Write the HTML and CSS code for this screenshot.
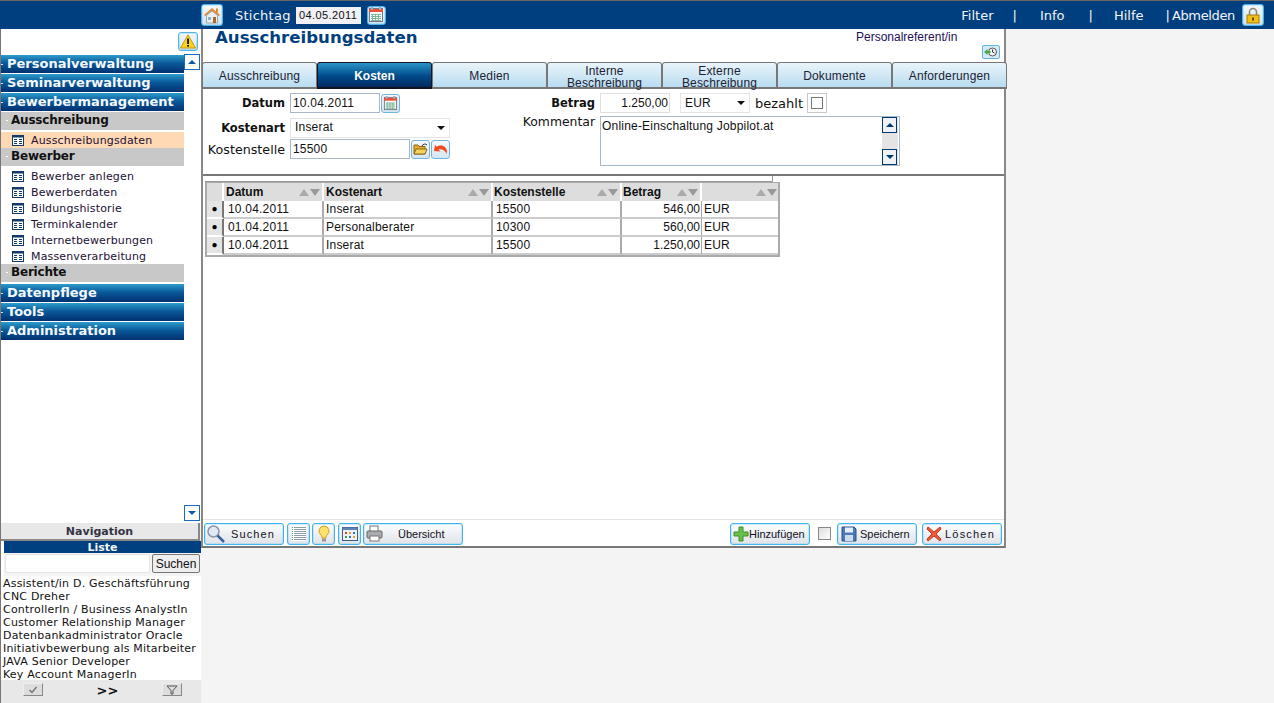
FILE: index.html
```html
<!DOCTYPE html>
<html lang="de">
<head>
<meta charset="utf-8">
<title>Ausschreibungsdaten</title>
<link rel="stylesheet" href="styles.css">
</head>
<body>
<svg class="defs" width="0" height="0">
  <symbol id="cal" viewBox="0 0 16 16">
    <rect x="1.500" y="1.500" width="13" height="13" fill="#fafafa" stroke="#778"/>
    <rect x="1" y="2" width="14" height="3" fill="#e8503a"/>
    <rect x="3" y="0" width="2" height="3" fill="#aab"/><rect x="11" y="0" width="2" height="3" fill="#aab"/>
    <path d="M3 7.500h10M3 9.500h10M3 11.500h10M3 13.500h10M4.500 7v7M7.500 7v7M10.500 7v7" stroke="#7fb59a" stroke-width="1" fill="none"/>
  </symbol>
  <symbol id="doc" viewBox="0 0 12 11">
    <rect x=".5" y=".5" width="11" height="10" fill="#fff" stroke="#123a68"/>
    <rect x=".5" y=".5" width="11" height="2" fill="#123a68"/>
    <path d="M2 4.500h3M7 4.500h3M2 6.500h3M7 6.500h3M2 8.500h3M7 8.500h3" stroke="#123a68"/>
  </symbol>
</svg>
<div class="app">
  <header class="topbar">
    <button class="icon-frame home" type="button" aria-label="Start">
      <svg width="18" height="18" viewBox="0 0 18 18"><path d="M1 9 9 2l8 7-1.500 1L9 4.500 2.500 10z" fill="#e8862a"/><path d="M3.500 9.500 9 5l5.500 4.500V17h-11z" fill="#eef0f4" stroke="#9aa"/><rect x="10" y="11" width="3" height="6" fill="#b0652a"/><rect x="5" y="11" width="3" height="3" fill="#8fb1cf"/><rect x="13" y="2.500" width="2" height="4" fill="#e8862a"/></svg>
    </button>
    <span class="stichtag">Stichtag</span>
    <span class="date-box">04.05.2011</span>
    <button class="icon-frame cal-top" type="button" aria-label="Kalender"><svg width="16" height="16"><use href="#cal"/></svg></button>
    <nav class="topnav">
      <a>Filter</a><span class="sep s1">|</span><a>Info</a><span class="sep s2">|</span><a>Hilfe</a><span class="sep s3">|</span><a class="logout">Abmelden</a>
      <button class="icon-frame lock" type="button" aria-label="Sperren"><svg width="16" height="17" viewBox="0 0 16 17"><path d="M4.500 8V5a3.500 3.500 0 0 1 7 0v3" fill="none" stroke="#8a8a70" stroke-width="1.600"/><rect x="2" y="8" width="12" height="8" fill="#f2c010" stroke="#a87a10"/><rect x="7" y="10.500" width="2" height="3" fill="#6a4a10"/></svg></button>
    </nav>
  </header>

  <div class="main">
    <aside class="sidebar">
      <div class="nav-area">
        <div class="warn-row">
          <button class="icon-frame warn" type="button" aria-label="Warnung"><svg width="16" height="15" viewBox="0 0 16 15"><path d="M8 .8 15.500 14H.5z" fill="#fbd21e" stroke="#c79a10"/><rect x="7.200" y="4.500" width="1.700" height="5.500"/><rect x="7.200" y="11" width="1.700" height="1.700"/></svg></button>
        </div>
        <div class="nav-body">
          <ul class="menu">
            <li class="lvl1">Personalverwaltung</li>
            <li class="lvl1">Seminarverwaltung</li>
            <li class="lvl1">Bewerbermanagement</li>
            <li class="lvl2">Ausschreibung</li>
            <li class="item current"><svg width="12" height="11"><use href="#doc"/></svg>Ausschreibungsdaten</li>
            <li class="lvl2 tight">Bewerber</li>
            <li class="item first"><svg width="12" height="11"><use href="#doc"/></svg>Bewerber anlegen</li>
            <li class="item"><svg width="12" height="11"><use href="#doc"/></svg>Bewerberdaten</li>
            <li class="item"><svg width="12" height="11"><use href="#doc"/></svg>Bildungshistorie</li>
            <li class="item"><svg width="12" height="11"><use href="#doc"/></svg>Terminkalender</li>
            <li class="item"><svg width="12" height="11"><use href="#doc"/></svg>Internetbewerbungen</li>
            <li class="item"><svg width="12" height="11"><use href="#doc"/></svg>Massenverarbeitung</li>
            <li class="lvl2 tight">Berichte</li>
            <li class="lvl1 after">Datenpflege</li>
            <li class="lvl1">Tools</li>
            <li class="lvl1">Administration</li>
          </ul>
          <div class="scroller">
            <button class="scroll-btn" type="button" aria-label="Hoch"><span class="arrow up"></span></button>
            <button class="scroll-btn" type="button" aria-label="Runter"><span class="arrow down"></span></button>
          </div>
        </div>
      </div>
      <div class="nav-label">Navigation</div>
      <div class="list-panel">
        <div class="list-title">Liste</div>
        <div class="list-search"><input class="list-input" type="text" aria-label="Suche"><button class="list-btn" type="button">Suchen</button></div>
        <ul class="list-items">
          <li>Assistent/in D. Geschäftsführung</li>
          <li>CNC Dreher</li>
          <li>ControllerIn / Business AnalystIn</li>
          <li>Customer Relationship Manager</li>
          <li>Datenbankadministrator Oracle</li>
          <li>Initiativbewerbung als Mitarbeiter</li>
          <li>JAVA Senior Developer</li>
          <li>Key Account ManagerIn</li>
        </ul>
      </div>
      <div class="list-foot">
        <button class="mini" type="button" aria-label="Auswahl"><svg width="10" height="8" viewBox="0 0 10 8"><path d="M1.500 4 4 6.500 8.500 1" fill="none" stroke="#777" stroke-width="1.500"/></svg></button>
        <span class="more">&gt;&gt;</span>
        <button class="mini" type="button" aria-label="Filter"><svg width="12" height="10" viewBox="0 0 12 10"><path d="M1 1h10L7 5.500V9H5V5.500z" fill="#ddd" stroke="#555"/></svg></button>
      </div>
    </aside>

    <main class="content">
      <div class="title-row">
        <h1>Ausschreibungsdaten</h1>
        <div class="role">
          <span>Personalreferent/in</span>
          <span class="hist"><svg width="14" height="10" viewBox="0 0 14 10"><circle cx="8.500" cy="5" r="4" fill="#f4f4f4" stroke="#555"/><path d="M8.500 2.500V5l2 1" fill="none" stroke="#333"/><path d="M0 5l3.500-3v2h3v2h-3v2z" fill="#48a848"/></svg></span>
        </div>
      </div>
      <div class="tabs">
        <div class="tab">Ausschreibung</div>
        <div class="tab active">Kosten</div>
        <div class="tab">Medien</div>
        <div class="tab two">Interne<br>Beschreibung</div>
        <div class="tab two">Externe<br>Beschreibung</div>
        <div class="tab">Dokumente</div>
        <div class="tab">Anforderungen</div>
      </div>
      <div class="panel">
        <form class="form">
          <div class="col-left">
            <div class="row r1">
              <label class="lbl strong">Datum</label><span class="field w90">10.04.2011</span>
              <button class="tool" type="button" aria-label="Kalender"><svg width="15" height="15"><use href="#cal"/></svg></button>
            </div>
            <div class="row r2">
              <label class="lbl strong">Kostenart</label><span class="field select w160">Inserat<span class="caret"></span></span>
            </div>
            <div class="row r3">
              <label class="lbl">Kostenstelle</label><span class="field w120">15500</span>
              <button class="tool" type="button" aria-label="Öffnen"><svg width="15" height="14" viewBox="0 0 15 14"><path d="M1 3h4l1 1.500h6V12H1z" fill="#e7a92a" stroke="#8a6a1a"/><path d="M3 7h11l-2 5H1z" fill="#f7d25a" stroke="#8a6a1a"/><path d="M9 4a3 3 0 0 1 5-1" fill="none" stroke="#333"/></svg></button>
              <button class="tool" type="button" aria-label="Zurück"><svg width="15" height="13" viewBox="0 0 15 13"><path d="M1 8l1-6 1.800 1.800C7 1.500 12.500 2 14 8l-.5 3c-1-3.500-5-5.500-8-4.500L7.500 8.500z" fill="#ee4a22"/></svg></button>
            </div>
          </div>
          <div class="col-right">
            <div class="row r1">
              <label class="lbl strong wide">Betrag</label><span class="field amount">1.250,00</span>
              <span class="field select eur">EUR<span class="caret"></span></span>
              <span class="paid">bezahlt</span><span class="check-frame"><span class="check"></span></span>
            </div>
            <div class="row r-comment">
              <label class="lbl wide up">Kommentar</label>
              <div class="textarea">
                <span class="ta-text">Online-Einschaltung Jobpilot.at</span>
                <div class="ta-scroll"><span class="ta-btn"><span class="arrow up dark"></span></span><span class="ta-btn"><span class="arrow down dark"></span></span></div>
              </div>
            </div>
          </div>
        </form>
        <div class="grid-wrap">
          <div class="grid-edge"></div>
          <table class="grid">
            <colgroup><col class="c0"><col class="c1"><col class="c2"><col class="c3"><col class="c4"><col class="c5"></colgroup>
            <thead>
              <tr>
                <th></th>
                <th><span class="th">Datum<span class="sort"><i class="s-up"></i><i class="s-down"></i></span></span></th>
                <th><span class="th">Kostenart<span class="sort"><i class="s-up"></i><i class="s-down"></i></span></span></th>
                <th class="tight-th"><span class="th">Kostenstelle<span class="sort"><i class="s-up"></i><i class="s-down"></i></span></span></th>
                <th class="tight-th"><span class="th">Betrag<span class="sort"><i class="s-up"></i><i class="s-down"></i></span></span></th>
                <th class="last-th"><span class="th"><span class="sort"><i class="s-up"></i><i class="s-down"></i></span></span></th>
              </tr>
            </thead>
            <tbody>
              <tr><td class="mark">●</td><td class="d1">10.04.2011</td><td class="d2">Inserat</td><td>15500</td><td class="num">546,00</td><td class="cur">EUR</td></tr>
              <tr><td class="mark">●</td><td class="d1">01.04.2011</td><td class="d2">Personalberater</td><td>10300</td><td class="num">560,00</td><td class="cur">EUR</td></tr>
              <tr><td class="mark">●</td><td class="d1">10.04.2011</td><td class="d2">Inserat</td><td>15500</td><td class="num">1.250,00</td><td class="cur">EUR</td></tr>
            </tbody>
          </table>
        </div>
      </div>
      <div class="toolbar">
        <button class="btn b-search" type="button"><svg width="20" height="20" viewBox="0 0 20 20"><circle cx="7.500" cy="7.500" r="5.500" fill="#dfe8f4" stroke="#8a97a8" stroke-width="1.500"/><path d="M11.500 11.500 18 18" stroke="#3a62a0" stroke-width="2.500"/></svg><span class="spaced">Suchen</span></button>
        <button class="btn b-icon" type="button" aria-label="Liste"><svg width="16" height="17" viewBox="0 0 16 17"><rect x="1" y="1" width="14" height="15" fill="#fff"/><path d="M3 2.500h12M3 4.500h12M3 6.500h12M3 8.500h12M3 10.500h12M3 12.500h12M3 14.500h12" stroke="#8e9cb2"/><path d="M1.500 2v13" stroke="#5aa85a" stroke-dasharray="1 1"/></svg></button>
        <button class="btn b-icon bulb" type="button" aria-label="Hinweis"><svg width="12" height="18" viewBox="0 0 12 18"><path d="M6 1a5 5 0 0 1 3 9c-.6.600-1 1.500-1 3H4c0-1.500-.4-2.400-1-3a5 5 0 0 1 3-9z" fill="#fbe26a" stroke="#d2a020"/><rect x="4" y="13.500" width="4" height="3" fill="#999"/></svg></button>
        <button class="btn b-icon" type="button" aria-label="Ansicht"><svg width="16" height="14" viewBox="0 0 16 14"><rect x=".5" y=".5" width="15" height="13" fill="#eef2f8" stroke="#3a5a88"/><rect x=".5" y=".5" width="15" height="2.500" fill="#5f85b5"/><rect x="3" y="5" width="2" height="2" fill="#d04030"/><rect x="7" y="5" width="2" height="2" fill="#e0a020"/><rect x="11" y="5" width="2" height="2" fill="#3a6ac0"/><rect x="3" y="9" width="2" height="2" fill="#40a040"/><rect x="7" y="9" width="2" height="2" fill="#3a6ac0"/><rect x="11" y="9" width="2" height="2" fill="#e0a020"/></svg></button>
        <button class="btn b-print" type="button"><svg width="17" height="17" viewBox="0 0 17 17"><rect x="4" y="1" width="8" height="6" fill="#fff" stroke="#777"/><rect x="1" y="6" width="15" height="7" rx="1" fill="#a8acb0" stroke="#666"/><rect x="4" y="11" width="9" height="5" fill="#fff" stroke="#777"/></svg><span class="print-text">Übersicht</span></button>
        <span class="spring"></span>
        <button class="btn b-add" type="button"><svg width="16" height="16" viewBox="0 0 16 16"><path d="M6 1h4v5h5v4h-5v5H6v-5H1V6h5z" fill="#6cc04a" stroke="#3a9030"/></svg>Hinzufügen</button>
        <span class="tool-check"></span>
        <button class="btn b-save" type="button"><svg width="16" height="16" viewBox="0 0 16 16"><path d="M1 1h12l2 2v12H1z" fill="#4a7ab8" stroke="#2a5288"/><rect x="4" y="1.500" width="8" height="5" fill="#e8eef6"/><rect x="4" y="9" width="8" height="6" fill="#cfdcec"/></svg><span class="save-text">Speichern</span></button>
        <button class="btn b-del" type="button"><svg width="16" height="16" viewBox="0 0 16 16"><path d="M2 1l6 5 6-5 1 2-5 5 5 5-1 2-6-5-6 5-1-2 5-5-5-5z" fill="#ee5a3a" stroke="#c03a20"/></svg><span class="spaced">Löschen</span></button>
      </div>
    </main>
  </div>
</div>
</body>
</html>
```
FILE: styles.css
```css
* { box-sizing: border-box; }
html, body { margin: 0; padding: 0; height: 100%; overflow: hidden; }
body { background: #f4f4f4; font-family: "Liberation Sans", Arial, sans-serif; font-size: 12px; color: #111; }
button { font: inherit; color: inherit; margin: 0; padding: 0; cursor: default; }
ul { list-style: none; margin: 0; padding: 0; }
.defs { position: absolute; }
.app { height: 703px; display: flex; flex-direction: column; border-left: 1px solid #777; }

/* top bar */
.topbar { height: 29px; flex: none; background: #003f7f; border-top: 1px solid #666; margin-left: -1px; display: flex; align-items: center; color: #f4f4f4; padding-left: 201px; font-family: "DejaVu Sans", sans-serif; font-size: 13px; }
.icon-frame { display: flex; align-items: center; justify-content: center; background: linear-gradient(#f5f8fb, #cfe4f2); border: 1px solid #50b4ea; box-shadow: inset 0 0 0 1px rgba(120, 200, 240, .35); border-radius: 3px; }
.home { width: 22px; height: 22px; }
.stichtag { margin-left: 12px; letter-spacing: .25px; }
.date-box { margin-left: 5px; width: 65px; height: 17px; background: #f0f0f5; color: #111; font-family: "Liberation Sans", sans-serif; font-size: 11px; letter-spacing: .4px; line-height: 17px; text-align: center; }
.cal-top { margin-left: 6px; width: 19px; height: 19px; }
.topnav { margin-left: auto; display: flex; align-items: center; padding-right: 10px; }
.s1 { margin: 0 23px 0 19px; }
.s2 { margin: 0 21px 0 24px; }
.s3 { margin: 0 2px 0 22px; }
.logout { letter-spacing: -.35px; }
.lock { width: 22px; height: 22px; margin-left: 7px; }

.main { flex: 1; display: flex; min-height: 0; }

/* sidebar */
.sidebar { width: 200px; flex: none; display: flex; flex-direction: column; font-family: "DejaVu Sans", sans-serif; }
.nav-area { height: 494px; padding-bottom: 2px; background: #fff; display: flex; flex-direction: column; }
.warn-row { display: flex; justify-content: flex-end; padding: 3px 3px 3px 0; height: 26px; flex: none; }
.warn { width: 20px; height: 19px; }
.nav-body { flex: 1; display: flex; }
.menu { width: 183px; }
.lvl1 { height: 18px; margin-bottom: 1px; background: linear-gradient(#2c9ccc, #0a5a9a 45%, #003070); color: #f4f8fb; font-weight: bold; font-size: 13px; line-height: 18px; white-space: nowrap; }
.lvl1::before { content: ""; display: inline-block; width: 2px; height: 1px; margin-right: 4px; background: #dde; vertical-align: middle; }
.lvl1.after { margin-top: 2px; }
.lvl2 { height: 18px; padding-left: 5px; background: #c8c8c8; color: #111; font-weight: bold; font-size: 12px; letter-spacing: -.2px; line-height: 16px; margin-bottom: 2px; }
.lvl2::before { content: ""; display: inline-block; width: 2px; height: 1px; margin-right: 3px; background: #fff; vertical-align: middle; }
.lvl2.tight { margin-bottom: 0; }
.item { height: 16px; display: flex; align-items: center; gap: 7px; padding-left: 11px; font-size: 11px; letter-spacing: .15px; color: #221133; white-space: nowrap; }
.item.current { background: #ffd8b4; }
.item.first { margin-top: 2px; }
.scroller { flex: 1; display: flex; flex-direction: column; justify-content: space-between; margin-top: -1px; }
.scroll-btn { width: 16px; height: 16px; background: #fff; border: 1px solid #1a6ac0; display: flex; align-items: center; justify-content: center; }
.arrow { width: 0; height: 0; border-left: 4px solid transparent; border-right: 4px solid transparent; }
.arrow.up { border-bottom: 4px solid #0a5aa8; }
.arrow.down { border-top: 4px solid #0a5aa8; }
.arrow.up.dark { border-bottom-color: #003a70; }
.arrow.down.dark { border-top-color: #003a70; }
.nav-label { height: 18px; background: #e8e8e8; border-right: 2px solid #888; border-bottom: 2px solid #888; margin-right: 1px; text-align: center; font-weight: bold; font-size: 11px; line-height: 17px; color: #333344; }
.list-panel { height: 139px; background: #fff; padding-left: 3px; overflow: hidden; }
.list-title { height: 12px; background: #004080; color: #f4f4f4; font-weight: bold; font-size: 11px; line-height: 13px; text-align: center; }
.list-search { display: flex; gap: 2px; padding: 0 0 2px 1px; height: 23px; background: #f4f4f4; align-items: center; }
.list-input { width: 145px; height: 19px; border: 1px solid #e4e4e4; border-radius: 2px; background: #fff; }
.list-btn { width: 48px; height: 19px; border: 1px solid #777; border-radius: 2px; background: #eee; font-family: "Liberation Sans", sans-serif; font-size: 12px; line-height: 16px; }
.list-items { font-size: 11px; letter-spacing: .2px; line-height: 13px; color: #111; padding-top: 1px; white-space: nowrap; margin-left: -1px; }
.list-foot { flex: 1; background: #e8e8e8; display: flex; align-items: flex-start; justify-content: space-between; padding: 3px 19px 0 22px; }
.mini { width: 20px; height: 13px; background: #ddd; border: 1px solid; border-color: #eee #888 #888 #eee; display: flex; align-items: center; justify-content: center; }
.more { font-weight: bold; font-size: 13px; line-height: 16px; margin-left: 10px; color: #111; }

/* content */
.content { width: 805px; flex: none; height: 519px; background: #fff; border-left: 2px solid #888; border-right: 2px solid #888; border-bottom: 2px solid #777; display: flex; flex-direction: column; }
.title-row { height: 33px; flex: none; display: flex; justify-content: space-between; }
h1 { margin: 0; padding: 0 0 0 12px; color: #004080; font-family: "DejaVu Sans", sans-serif; font-size: 16.600px; line-height: 17px; font-weight: bold; }
.role { width: 148px; display: flex; flex-direction: column; color: #221155; line-height: 14px; padding-top: 1px; }
.hist { align-self: flex-end; margin: 1px 4px 0 0; width: 18px; height: 14px; border: 1px solid #62b4e4; border-radius: 2px; background: #d5eaf6; display: flex; align-items: center; justify-content: center; }
.tabs { height: 27px; flex: none; display: flex; margin-left: -1px; margin-right: -2px; }
.tab { width: 115px; height: 27px; flex: none; border: 1px solid #777; border-bottom: 2px solid #777; border-radius: 3px 3px 0 0; background: linear-gradient(#eaf4fa, #b8dcf0); text-align: center; line-height: 27px; letter-spacing: .15px; color: #223; }
.tab.two { line-height: 12px; padding-top: 2px; }
.tab.active { background: linear-gradient(#2a94c8, #004a8a 55%, #002a60); color: #fff; font-weight: bold; letter-spacing: 0; border-color: #112; }
.panel { flex: 1; min-height: 0; display: flex; flex-direction: column; }
.form { height: 87px; flex: none; border-bottom: 2px solid #777; display: flex; padding-left: 1px; }
.col-left { width: 250px; }
.col-right { flex: 1; }
.row { display: flex; align-items: center; font-size: 12px; }
.r1 { height: 20px; margin-top: 4px; }
.r2 { height: 21px; margin-top: 4px; }
.r3 { height: 20px; margin-top: 1px; }
.lbl { width: 81px; flex: none; text-align: right; margin-right: 5px; font-family: "DejaVu Sans", sans-serif; font-size: 12.700px; white-space: nowrap; }
.lbl.strong { font-weight: bold; font-size: 11.500px; }
.lbl.wide { width: 141px; }
.lbl.up { align-self: flex-start; line-height: 14px; margin-top: -1px; font-size: 12.400px; }
.field { height: 20px; border: 1px solid #a8b8c8; background: #fff; padding-left: 2px; line-height: 17px; flex: none; display: flex; align-items: center; font-size: 12px; letter-spacing: .2px; }
.w90 { width: 90px; }
.w120 { width: 120px; }
.w160 { width: 160px; }
.select { border-color: #e4e4e4; padding-left: 4px; justify-content: space-between; padding-right: 4px; }
.caret { width: 0; height: 0; border-left: 4px solid transparent; border-right: 4px solid transparent; border-top: 4px solid #111; }
.tool { width: 19px; height: 19px; margin-left: 1px; background: linear-gradient(#f5f8fb, #d4e6f2); border: 1px solid #72b4dc; border-radius: 3px; display: flex; align-items: center; justify-content: center; flex: none; }
.amount { width: 70px; justify-content: flex-end; padding-right: 1px; border-color: #e0e0e0; letter-spacing: 0; }
.eur { width: 70px; margin-left: 10px; }
.paid { margin-left: 5px; font-family: "DejaVu Sans", sans-serif; font-size: 13px; }
.check-frame { width: 20px; height: 20px; margin-left: 4px; border: 1px solid #c8c8c8; display: flex; align-items: center; justify-content: center; }
.check { width: 12px; height: 12px; border: 1px solid #777; background: #fff; }
.r-comment { margin-top: 3px; align-items: flex-start; }
.textarea { width: 300px; height: 50px; border: 1px solid #a8b8c8; display: flex; justify-content: space-between; }
.ta-text { padding: 2px 0 0 1px; letter-spacing: .2px; }
.ta-scroll { width: 16px; background: #e4e4e4; display: flex; flex-direction: column; justify-content: space-between; margin: 0 1px 0 0; }
.ta-btn { width: 15px; height: 16px; border: 1px solid #003a70; background: #eef2f6; display: flex; align-items: center; justify-content: center; }
.grid-wrap { padding: 0 0 0 2px; }
.grid-edge { height: 6px; width: 568px; border-right: 1px solid #999; border-bottom: 1px solid #999; }
.grid { border-collapse: separate; border-spacing: 0; table-layout: fixed; width: 575px; border: 2px solid #aaa; border-top: 1px solid #aaa; font-size: 12px; }
.c0 { width: 17px; } .c1 { width: 100px; } .c2 { width: 169px; } .c3 { width: 129px; } .c4 { width: 80px; } .c5 { width: 76px; }
th { height: 18px; padding: 0; background: #ddd; border-right: 2px solid #fff; font-weight: bold; text-align: left; }
.th { display: flex; align-items: center; justify-content: space-between; padding: 0 2px 0 2px; line-height: 16px; }
.tight-th .th { padding-left: 1px; }
.last-th { border-right: 0; }
.last-th .th { padding-right: 1px; }
.sort { display: inline-flex; gap: 1px; margin-left: auto; }
.s-up, .s-down { width: 0; height: 0; border-left: 5px solid transparent; border-right: 5px solid transparent; }
.s-up { border-bottom: 7px solid #aaa; }
.s-down { border-top: 7px solid #999; }
td { height: 18px; padding: 0 0 0 3px; border-right: 2px solid #aaa; border-bottom: 2px solid #ccc; white-space: nowrap; line-height: 14px; letter-spacing: .2px; }
td.d1 { padding-left: 4px; }
td.d2 { padding-left: 2px; }
td.mark { background: #e4e4e4; font-size: 10px; letter-spacing: 0; color: #000; text-align: center; padding: 0; border-right: 2px solid #777; border-bottom: 2px solid #fff; }
td.num { text-align: right; padding: 0 1px 0 0; border-right: 1px solid #aaa; letter-spacing: 0; }
td.cur { padding-left: 2px; border-right: 0; }

.toolbar { height: 27px; flex: none; border-top: 1px solid #e4e4e4; display: flex; align-items: center; padding: 1px 2px 0 1px; }
.btn { height: 22px; display: flex; align-items: center; background: linear-gradient(#fcfdfe, #dfe3e8); border: 1px solid #40b4ee; box-shadow: inset 0 0 0 1px rgba(120, 200, 240, .3); border-radius: 3px; font-size: 11px; color: #112; flex: none; }
.spaced { letter-spacing: 1.100px; }
.b-search { width: 80px; padding-left: 1px; gap: 5px; }
.b-icon { width: 23px; margin-left: 3px; justify-content: center; }
.b-icon.bulb { margin-left: 2px; }
.b-print { width: 100px; margin-left: 2px; padding-left: 2px; }
.print-text { margin-left: 15px; }
.spring { flex: 1; }
.b-add { width: 80px; padding-left: 2px; }
.tool-check { width: 13px; height: 13px; margin: 0 6px 0 8px; border: 1px solid #888; background: linear-gradient(135deg, #ddd, #fff); }
.b-save { width: 80px; padding-left: 3px; }
.save-text { margin-left: 3px; }
.b-del { width: 80px; margin-left: 5px; padding-left: 3px; gap: 3px; }
.b-del .spaced { letter-spacing: 1.200px; }
```
